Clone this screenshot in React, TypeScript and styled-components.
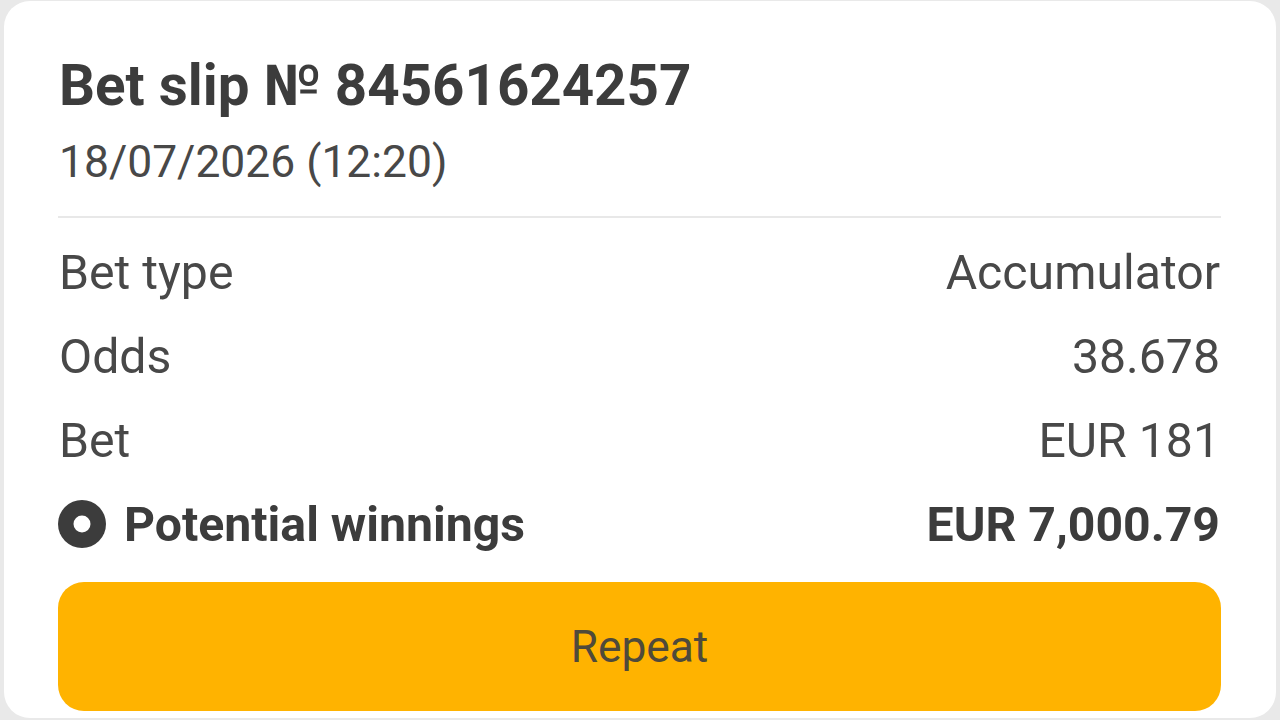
import styled, { createGlobalStyle } from 'styled-components';

const GlobalStyle = createGlobalStyle`
  html, body {
    margin: 0;
    padding: 0;
    background: #e9e9e9;
  }
`;

const rows = [
  { label: 'Bet type', value: 'Accumulator' },
  { label: 'Odds', value: '38.678' },
  { label: 'Bet', value: 'EUR 181' },
];

export default function App() {
  return (
    <>
      <GlobalStyle />
      <Page>
        <Card>
          <Title>Bet slip № 84561624257</Title>
          <DateLine>18/07/2026 (12:20)</DateLine>
          <Divider />
          <Rows>
            {rows.map((row) => (
              <Row key={row.label}>
                <span>{row.label}</span>
                <span>{row.value}</span>
              </Row>
            ))}
            <Row $strong>
              <LabelWithIcon>
                <svg width="50" height="50" viewBox="0 0 50 50" aria-hidden="true">
                  <circle cx="25" cy="25" r="24" fill="#3c3c3c" />
                  <circle cx="25" cy="25" r="8.5" fill="#ffffff" />
                </svg>
                Potential winnings
              </LabelWithIcon>
              <span>EUR 7,000.79</span>
            </Row>
          </Rows>
          <RepeatButton>Repeat</RepeatButton>
        </Card>
      </Page>
    </>
  );
}

const Page = styled.div`
  width: 1280px;
  height: 720px;
  padding: 1px 4px 2px;
  box-sizing: border-box;
  overflow: hidden;
  background: #e9e9e9;
  font-family: Roboto, 'Liberation Sans', sans-serif;
`;

const Card = styled.div`
  height: 100%;
  box-sizing: border-box;
  padding: 55px 55px 6px 54px;
  border-radius: 26px;
  background: #ffffff;
  display: flex;
  flex-direction: column;
`;

const Title = styled.div`
  padding-left: 1px;
  color: #3c3c3c;
  font-size: 56.5px;
  font-weight: 700;
  line-height: 60px;
`;

const DateLine = styled.div`
  margin-top: 19px;
  padding-left: 1px;
  color: #484848;
  font-size: 44.4px;
  line-height: 54px;
`;

const Divider = styled.div`
  margin-top: 27px;
  height: 2px;
  background: #e8e8e8;
`;

const Rows = styled.div`
  margin-top: 12px;
  display: flex;
  flex-direction: column;
  padding: 0 1px;
`;

const Row = styled.div<{ $strong?: boolean }>`
  height: 84px;
  display: flex;
  align-items: center;
  justify-content: space-between;
  color: ${(p) => (p.$strong ? '#3c3c3c' : '#484848')};
  font-size: 48.2px;
  font-weight: ${(p) => (p.$strong ? 700 : 400)};
`;

const LabelWithIcon = styled.span`
  display: flex;
  align-items: center;
  gap: 17px;
  margin-left: -2px;
`;

const RepeatButton = styled.button`
  margin-top: 16px;
  height: 129px;
  border: 0;
  border-radius: 26px;
  background: #ffb300;
  color: #4f4a3a;
  font-family: inherit;
  font-size: 44.3px;
`;
